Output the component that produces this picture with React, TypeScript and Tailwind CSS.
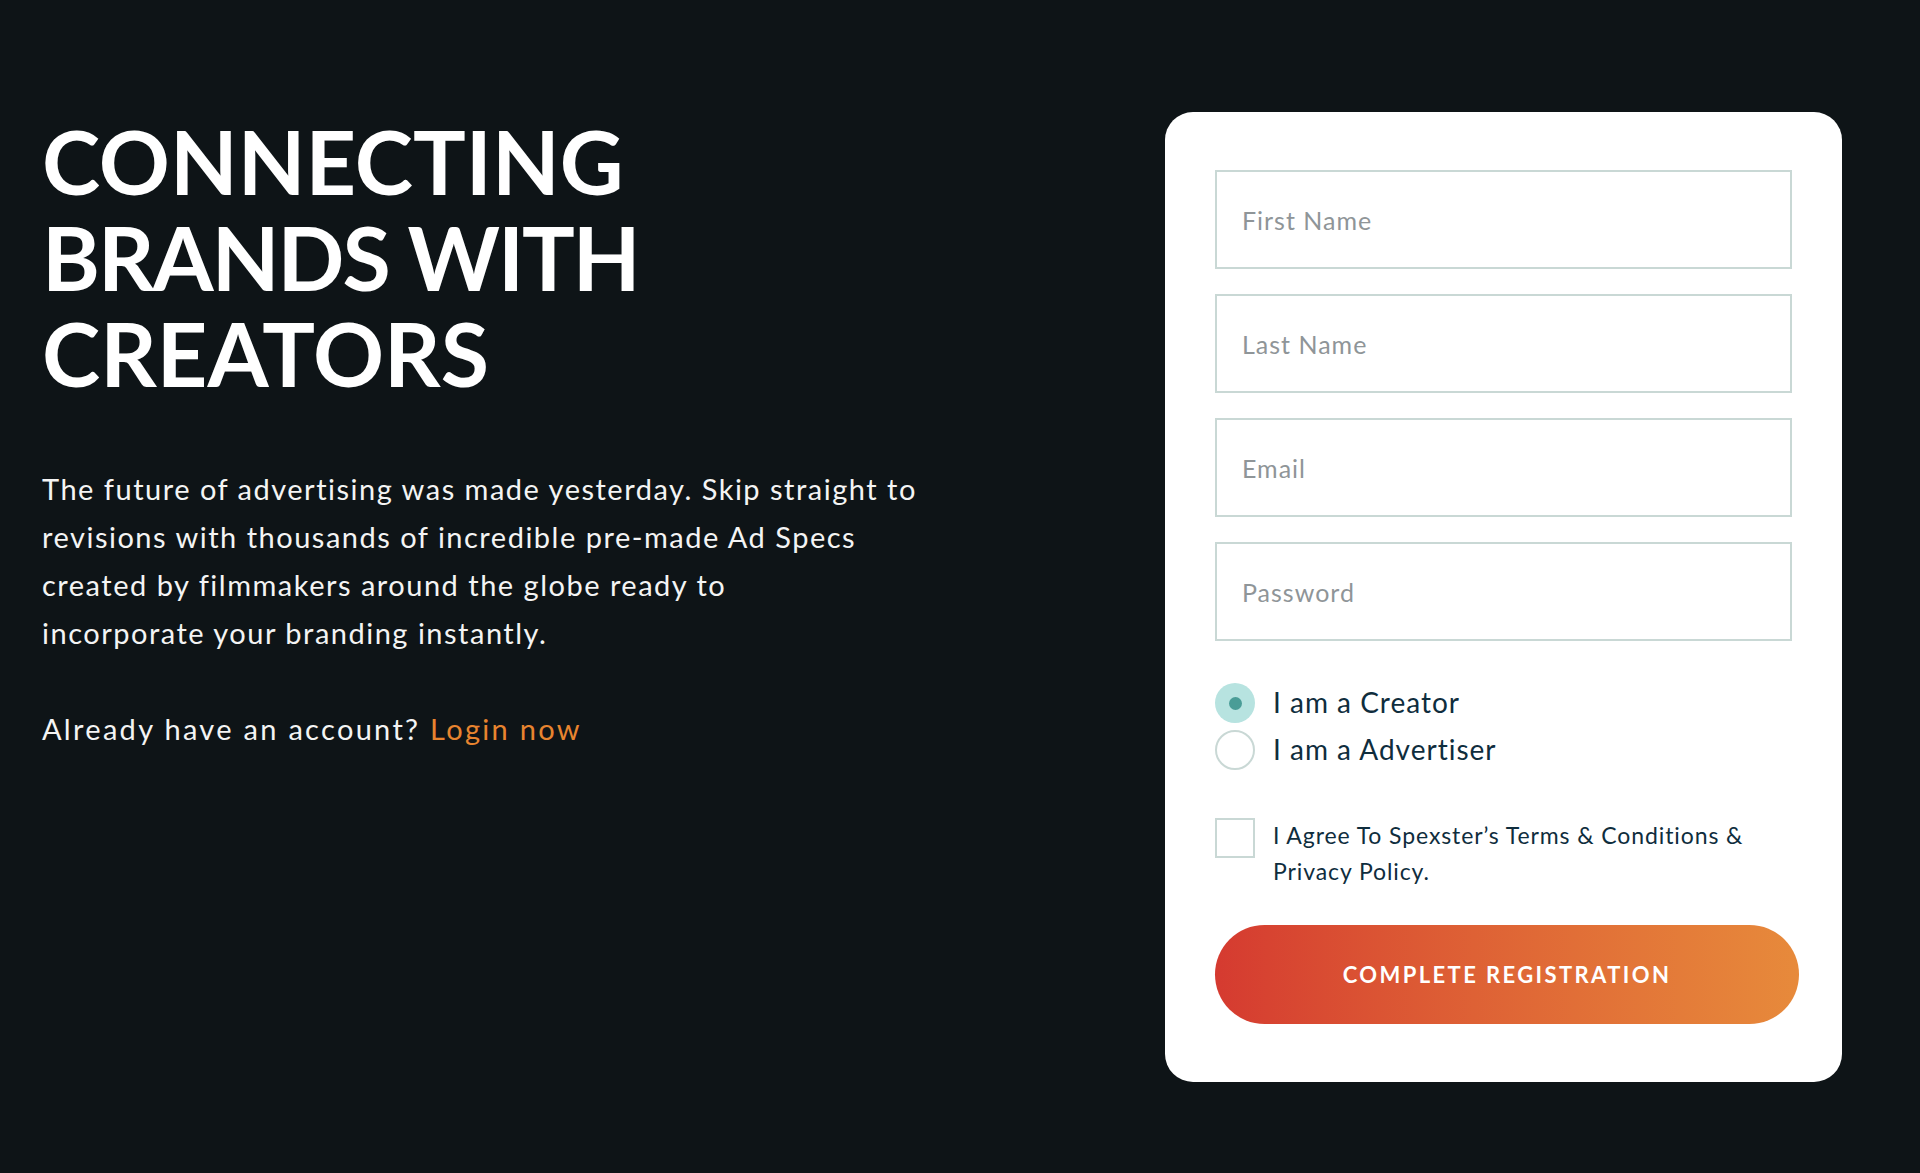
import React, { useState } from 'react'

const fields = ['First Name', 'Last Name', 'Email', 'Password']

function Radio({ checked, label, onClick }: { checked: boolean; label: string; onClick: () => void }) {
  return (
    <button type="button" onClick={onClick} className="flex items-center h-[40px] gap-[18px] text-left">
      {checked ? (
        <span className="w-[40px] h-[40px] rounded-full bg-[#b7e3e0] flex items-center justify-center shrink-0">
          <span className="w-[13px] h-[13px] rounded-full bg-[#4a9d97]" />
        </span>
      ) : (
        <span className="w-[40px] h-[40px] rounded-full border-2 border-[#c9d8d5] bg-white shrink-0" />
      )}
      <span className="text-[28px] leading-[40px] tracking-[1px] text-[#0f2d3d] -mt-[3px]">{label}</span>
    </button>
  )
}

export default function App() {
  const [role, setRole] = useState('creator')
  const [agree, setAgree] = useState(false)

  return (
    <div
      className="min-h-[1173px] w-full bg-[#0e1417] flex justify-between pl-[42px] pr-[78px] pt-[112px]"
      style={{ fontFamily: 'Lato, "Open Sans", sans-serif' }}
    >
      <div className="flex flex-col">
        <h1 className="text-white font-bold text-[88px] leading-[96px] mt-[1px]">
          CONNECTING
          <br />
          <span className="tracking-[-2px]">BRANDS WITH</span>
          <br />
          CREATORS
        </h1>
        <p className="mt-[64px] text-[#f4f4f4] text-[29px] leading-[48px] tracking-[1.5px] w-[940px]">
          The future of advertising was made yesterday. Skip straight to
          <br />
          revisions with thousands of incredible pre-made Ad Specs
          <br />
          created by filmmakers around the globe ready to
          <br />
          incorporate your branding instantly.
        </p>
        <p className="mt-[48px] text-[#f4f4f4] text-[29px] leading-[48px] tracking-[2.3px]">
          Already have an account?{' '}
          <a href="/" className="text-[#e8842f]">
            Login now
          </a>
        </p>
      </div>

      <div className="w-[677px] h-[970px] bg-white rounded-[28px] pt-[58px] px-[50px] pb-[58px] flex flex-col">
        <div className="flex flex-col gap-[25px]">
          {fields.map((f) => (
            <input
              key={f}
              type={f === 'Password' ? 'password' : 'text'}
              placeholder={f}
              className="w-full h-[99px] border-2 border-[#c9d8d5] px-[25px] text-[25px] tracking-[1px] text-[#0f2d3d] placeholder:text-[#8f9598] outline-none"
            />
          ))}
        </div>

        <div className="mt-[42px] flex flex-col gap-[7px]">
          <Radio checked={role === 'creator'} label="I am a Creator" onClick={() => setRole('creator')} />
          <Radio checked={role === 'advertiser'} label="I am a Advertiser" onClick={() => setRole('advertiser')} />
        </div>

        <div className="mt-[48px] flex items-start gap-[18px]">
          <button
            type="button"
            onClick={() => setAgree(!agree)}
            className="w-[40px] h-[40px] border-2 border-[#c9d8d5] shrink-0 flex items-center justify-center"
          >
            {agree && <span className="w-[18px] h-[18px] bg-[#4a9d97]" />}
          </button>
          <p className="text-[23px] leading-[36px] tracking-[0.9px] text-[#0f2d3d] -mt-[1px]">
            I Agree To Spexster’s Terms &amp; Conditions &amp;
            <br />
            Privacy Policy.
          </p>
        </div>

        <button
          type="button"
          className="mt-[36px] w-[584px] h-[99px] rounded-full bg-gradient-to-r from-[#d53a30] to-[#e78a3b] text-white font-bold text-[22px] tracking-[2.4px]"
        >
          COMPLETE REGISTRATION
        </button>
      </div>
    </div>
  )
}
